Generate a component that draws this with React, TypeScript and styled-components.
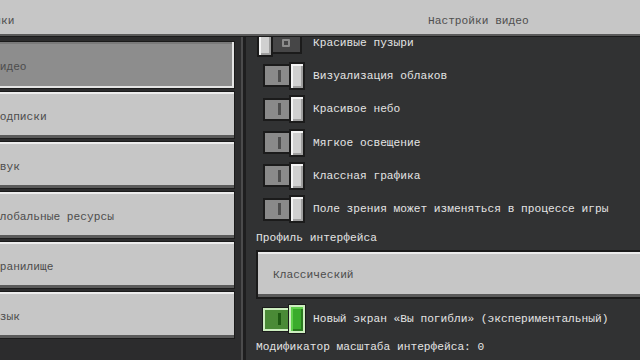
import React from 'react'
import styled, { createGlobalStyle } from 'styled-components';

const GlobalStyle = createGlobalStyle`
  html, body {
    margin: 0;
    padding: 0;
    background: #313233;
    overflow: hidden;
  }
  * { box-sizing: border-box; }
`;

const Screen = styled.div`
  width: 640px;
  height: 360px;
  display: flex;
  flex-direction: column;
  overflow: hidden;
  font-family: "Liberation Mono", "DejaVu Sans Mono", monospace;
  font-size: 11.2px;
`;

const Header = styled.header`
  height: 36px;
  flex: none;
  display: grid;
  grid-template-columns: 246px 1fr;
  align-items: center;
  padding-top: 7px;
  background: #c6c6c6;
  border-bottom: 2px solid #5a5a5a;
  color: #4f4f4f;
  overflow: hidden;
  white-space: nowrap;
`;

const BackLabel = styled.span`
  margin-left: -46px;
`;

const Title = styled.span`
  padding-left: 182px;
`;

const Body = styled.div`
  flex: 1;
  display: flex;
  border-top: 1px solid #1b1b1b;
  overflow: hidden;
`;

const Nav = styled.nav`
  width: 243px;
  flex: none;
  display: flex;
  flex-direction: column;
  gap: 2px;
  padding: 4px 6px 0 0;
  background: #2c2c2d;
  border-right: 2px solid #4b4b4c;
`;

type NavButtonProps = {
  selected?: boolean;
}
const NavButton = styled.div<NavButtonProps>`
  height: 48px;
  flex: none;
  margin-left: -12px;
  display: flex;
  align-items: center;
  padding: 4px 0 0 4px;
  white-space: nowrap;
  color: #4c4c4c;
  background: ${props => props.selected ? '#8d8d8d' : '#c6c6c6'};
  border: 1px solid #1b1b1b;
  box-shadow: ${props => props.selected
    ? 'inset -2px -2px 0 #e4e4e4, inset 0 2px 0 #7a7a7a'
    : 'inset 0 2px 0 #ececec, inset 0 -3px 0 #5a5a5a'};
`;

const Panel = styled.section`
  flex: 1;
  display: flex;
  flex-direction: column;
  padding-left: 10px;
  margin-top: -11px;
  background: #313233;
  border-left: 3px solid #1e1e1f;
  color: #e4e4e4;
  white-space: nowrap;
`;

const Row = styled.div`
  height: 33.3px;
  flex: none;
  display: flex;
  align-items: center;
  padding-left: 7px;
`;

const ToggleSlot = styled.div`
  width: 50px;
  flex: none;
  display: flex;
  align-items: center;
`;

type SwitchProps = {
  on: boolean;
  green?: boolean;
}
const Switch = styled.div<SwitchProps>`
  display: flex;
  flex-direction: ${props => props.on ? 'row' : 'row-reverse'};
  align-items: center;
  margin-left: ${props => props.on ? '0' : '-6px'};
`;

const Track = styled.div<SwitchProps>`
  width: ${props => props.on ? 29 : 32}px;
  height: 23px;
  display: flex;
  align-items: center;
  justify-content: ${props => props.on ? 'flex-start' : 'center'};
  padding-left: ${props => props.on ? 13 : 0}px;
  background: ${props => props.green ? '#4a8a36' : props.on ? '#8a8a8a' : '#464647'};
  border: 2px solid ${props => props.green ? '#cdeec0' : '#1b1b1b'};
  outline: ${props => props.green ? '1px solid #1b1b1b' : 'none'};
  ${props => props.on ? 'margin-right: -3px;' : 'margin-left: -3px;'}
`;

const Bar = styled.div<{ green?: boolean }>`
  width: 3px;
  height: 12px;
  background: ${props => props.green ? '#1e5a12' : '#4e4e4e'};
`;

const Ring = styled.div`
  width: 8px;
  height: 8px;
  border: 2px solid #8c8c8c;
  border-radius: 1px;
`;

const Thumb = styled.div<{ green?: boolean }>`
  position: relative;
  width: 16px;
  height: 28px;
  background: ${props => props.green ? '#3aab2c' : '#d0d0d0'};
  border: 2px solid ${props => props.green ? '#cdeec0' : '#1b1b1b'};
  outline: ${props => props.green ? '1px solid #1b1b1b' : 'none'};
  box-shadow: ${props => props.green
    ? 'inset 2px 2px 0 #5fd04b, inset -2px -2px 0 #2a7a1f'
    : 'inset 2px 2px 0 #f4f4f4, inset -2px -2px 0 #9e9e9e'};
`;

const Label = styled.span`
  line-height: 16px;
`;

type SectionLabelProps = {
  gap: number;
}
const SectionLabel = styled.div<SectionLabelProps>`
  height: 16px;
  flex: none;
  margin-top: ${props => props.gap}px;
  line-height: 16px;
`;

const Dropdown = styled.div`
  height: 49px;
  flex: none;
  margin-top: 4px;
  width: calc(100% + 20px);
  display: flex;
  align-items: center;
  padding: 1px 0 0 15px;
  color: #4c4c4c;
  background: #c6c6c6;
  border: 2px solid #1b1b1b;
  box-shadow: inset 0 2px 0 #ececec, inset 0 -3px 0 #5a5a5a;
`;

const GreenRow = styled(Row)`
  margin-top: 4px;
`;

type ToggleProps = {
  on: boolean;
  green?: boolean;
}
const Toggle = ({ on, green }: ToggleProps) => (
  <ToggleSlot>
    <Switch on={on}>
      <Track on={on} green={green}>
        {on ? <Bar green={green} /> : <Ring />}
      </Track>
      <Thumb green={green} />
    </Switch>
  </ToggleSlot>
);

const navItems = ['Видео', 'Подписки', 'Звук', 'Глобальные ресурсы', 'Хранилище', 'Язык'];

const options = [
  { label: 'Красивые пузыри', on: false },
  { label: 'Визуализация облаков', on: true },
  { label: 'Красивое небо', on: true },
  { label: 'Мягкое освещение', on: true },
  { label: 'Классная графика', on: true },
  { label: 'Поле зрения может изменяться в процессе игры', on: true },
];

const App = () => {
  return (
    <>
      <GlobalStyle />
      <Screen>
        <Header>
          <BackLabel>Настройки</BackLabel>
          <Title>Настройки видео</Title>
        </Header>
        <Body>
          <Nav>
            {navItems.map((item, i) => (
              <NavButton key={item} selected={i === 0}>{item}</NavButton>
            ))}
          </Nav>
          <Panel>
            {options.map(opt => (
              <Row key={opt.label}>
                <Toggle on={opt.on} />
                <Label>{opt.label}</Label>
              </Row>
            ))}
            <SectionLabel gap={4}>Профиль интерфейса</SectionLabel>
            <Dropdown>Классический</Dropdown>
            <GreenRow>
              <Toggle on green />
              <Label>Новый экран «Вы погибли» (экспериментальный)</Label>
            </GreenRow>
            <SectionLabel gap={3}>Модификатор масштаба интерфейса: 0</SectionLabel>
          </Panel>
        </Body>
      </Screen>
    </>
  )
}

export default App;
